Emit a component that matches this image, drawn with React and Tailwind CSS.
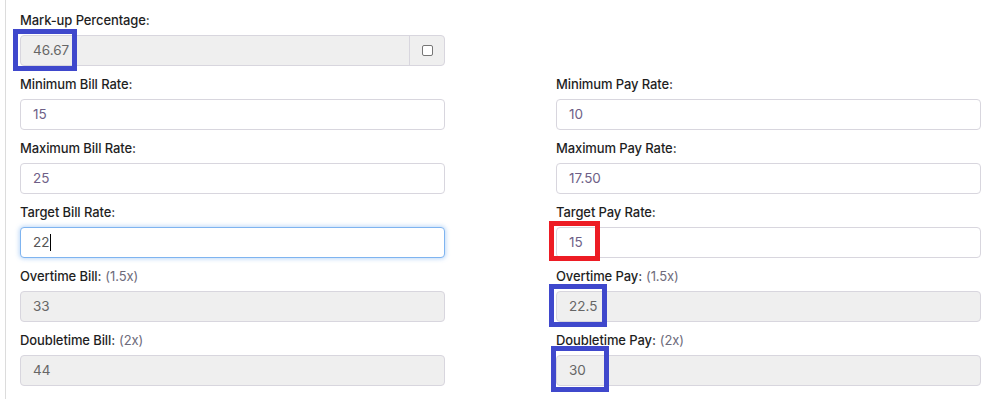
import React from 'react';

const font = { fontFamily: 'Inter, "Open Sans", sans-serif' };

const Label = ({ children, hint }) => (
  <div className="h-[20px] leading-[20px] text-[13px] font-medium text-[#1f1f1f] mb-[5px] tracking-[-0.1px]">
    {children}
    {hint && <span className="font-normal text-[#6e6b7b] ml-1">{hint}</span>}
  </div>
);

const Field = ({ value, disabled, focused, addon }) => {
  let cls = 'bg-white border-[#d8d6de] text-[#6e5f87]';
  if (disabled) cls = 'bg-[#efefef] border-[#d8d6de] text-[#666]';
  if (focused) cls = 'bg-white border-[#7fb4f0] shadow-[0_0_4px_1px_rgba(110,170,240,0.45)] text-[#555]';
  return (
    <div className={`h-[31px] border rounded-[4px] flex items-stretch text-[13.5px] ${cls}`}>
      <div className="flex-1 flex items-center pl-[12px]">
        {value}
        {focused && <span className="inline-block w-px h-[17px] bg-black ml-px" />}
      </div>
      {addon && (
        <div className="w-[35px] border-l border-[#d8d6de] flex items-center justify-center">
          <span className="w-[11px] h-[11px] border border-[#767676] rounded-[2px] bg-white" />
        </div>
      )}
    </div>
  );
};

const Row = ({ children }) => <div className="mb-[8px]">{children}</div>;

const Mark = ({ className }) => (
  <div className={`absolute border-[5px] pointer-events-none ${className}`} />
);

export default function App() {
  return (
    <div className="relative w-[1002px] h-[399px] bg-white overflow-hidden" style={font}>
      <div className="ml-[5px] h-full border-l border-[#dcdcdc] pl-[14px] pt-[10px]">
        <div className="w-[425px]">
          <Row>
            <Label>Mark-up Percentage:</Label>
            <Field value="46.67" disabled addon />
          </Row>
        </div>
        <div className="flex gap-[111px]">
          <div className="w-[425px]">
            <Row>
              <Label>Minimum Bill Rate:</Label>
              <Field value="15" />
            </Row>
            <Row>
              <Label>Maximum Bill Rate:</Label>
              <Field value="25" />
            </Row>
            <Row>
              <Label>Target Bill Rate:</Label>
              <Field value="22" focused />
            </Row>
            <Row>
              <Label hint="(1.5x)">Overtime Bill:</Label>
              <Field value="33" disabled />
            </Row>
            <Row>
              <Label hint="(2x)">Doubletime Bill:</Label>
              <Field value="44" disabled />
            </Row>
          </div>
          <div className="w-[425px]">
            <Row>
              <Label>Minimum Pay Rate:</Label>
              <Field value="10" />
            </Row>
            <Row>
              <Label>Maximum Pay Rate:</Label>
              <Field value="17.50" />
            </Row>
            <Row>
              <Label>Target Pay Rate:</Label>
              <Field value="15" />
            </Row>
            <Row>
              <Label hint="(1.5x)">Overtime Pay:</Label>
              <Field value="22.5" disabled />
            </Row>
            <Row>
              <Label hint="(2x)">Doubletime Pay:</Label>
              <Field value="30" disabled />
            </Row>
          </div>
        </div>
      </div>

      <Mark className="left-[13px] top-[29px] w-[64px] h-[42px] border-[#3f48cc]" />
      <Mark className="left-[549px] top-[221px] w-[51px] h-[40px] border-[#ed1c24]" />
      <Mark className="left-[549px] top-[284px] w-[58px] h-[43px] border-[#3f48cc]" />
      <Mark className="left-[551px] top-[346px] w-[58px] h-[46px] border-[#3f48cc]" />
    </div>
  );
}
